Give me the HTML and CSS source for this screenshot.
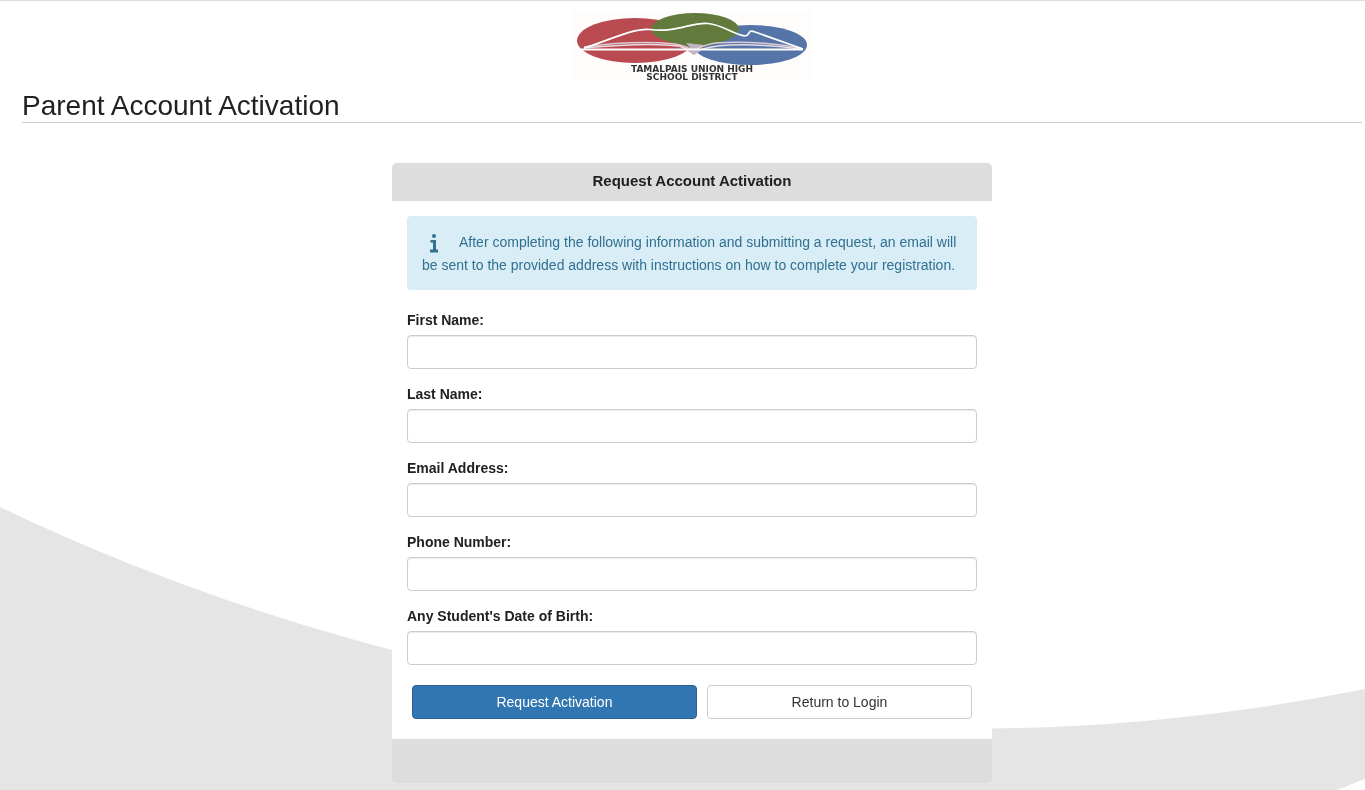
FILE: index.html
```html
<!DOCTYPE html>
<html lang="en">
<head>
<meta charset="utf-8">
<title>Parent Account Activation</title>
<link rel="stylesheet" href="styles.css">
</head>
<body>
<svg class="backdrop" viewBox="0 0 1365 790" preserveAspectRatio="none" aria-hidden="true">
  <path fill="#e5e5e5" d="M0 507Q186 596 392 650Q692 730 992 728.500Q1177 726.500 1365 689V779L1337 790H0Z"/>
</svg>
<header class="masthead">
  <svg class="logo" viewBox="0 0 240 70" role="img" aria-label="Tamalpais Union High School District">
    <rect width="240" height="70" fill="#fefdfb"/>
    <ellipse cx="63" cy="29.500" rx="58" ry="22.500" fill="#b84a50"/>
    <ellipse cx="178" cy="34" rx="57" ry="20" fill="#5575a8"/>
    <ellipse cx="123" cy="18" rx="44" ry="16" fill="#627b3d"/>
    <path d="M102 31H144L130 37L122 41L114 35Z" fill="#627b3d"/>
    <path d="M114 32L122 41L132 34Z" fill="#c3b4c4"/>
    <path d="M12 36Q63 29 103 33Q117 36 122 40Q128 35 143 32Q183 29 229 37" fill="none" stroke="#dccbd2" stroke-width="1.500"/>
    <path d="M12 37Q75 31 107 35L122 41Q136 35 158 34Q193 33 229 38" fill="none" stroke="#e7dce2" stroke-width="1.500"/>
    <path d="M9 38.500H231" fill="none" stroke="#fff" stroke-width="2"/>
    <path d="M115 39.500L122 44L129 39.500Z" fill="#c3b4c4"/>
    <path d="M12 37C36 30 60 17 78 18.500C104 22 119 11 136 12.500C151 14 161 23 173 25C179 24 175 18 183 21L231 38" fill="none" stroke="#fff" stroke-width="1.700"/>
    <text class="logo-text" x="120" y="61">TAMALPAIS UNION HIGH</text>
    <text class="logo-text" x="120" y="69">SCHOOL DISTRICT</text>
  </svg>
</header>
<main class="page">
  <h1 class="page-title">Parent Account Activation</h1>
  <form class="panel">
    <h2 class="panel-heading">Request Account Activation</h2>
    <div class="panel-body">
      <p class="notice">
        <svg class="notice-icon" viewBox="0 0 8 19" aria-hidden="true">
          <circle cx="4" cy="2" r="2"/>
          <path d="M.500 6H6V15.500H8V18.500H0V15.500H3V8.500H.500Z"/>
        </svg>After completing the following information and submitting a request, an email will be sent to the provided address with instructions on how to complete your registration.
      </p>
      <div class="field"><label for="first">First Name:</label><input id="first" type="text"></div>
      <div class="field"><label for="last">Last Name:</label><input id="last" type="text"></div>
      <div class="field"><label for="email">Email Address:</label><input id="email" type="email"></div>
      <div class="field"><label for="phone">Phone Number:</label><input id="phone" type="tel"></div>
      <div class="field"><label for="dob">Any Student's Date of Birth:</label><input id="dob" type="text"></div>
      <div class="actions">
        <button class="btn btn-primary" type="submit">Request Activation</button>
        <button class="btn btn-default" type="button">Return to Login</button>
      </div>
    </div>
    <div class="panel-footer"></div>
  </form>
</main>
</body>
</html>
```
FILE: styles.css
```css
* { box-sizing: border-box; }
body {
  margin: 0;
  border-top: 1px solid #ddd;
  background: #fff;
  color: #212121;
  font: 14px/20px "Liberation Sans", Arial, sans-serif;
}
.backdrop {
  position: fixed;
  inset: 0;
  z-index: -1;
  width: 100%;
  height: 100%;
}
.masthead {
  display: flex;
  justify-content: center;
  padding: 10px 3px 0 22px;
}
.logo { display: block; width: 240px; height: 70px; overflow: visible; }
.logo-text {
  fill: #333;
  font: bold 9px "DejaVu Sans", sans-serif;
  text-anchor: middle;
}
.page { padding: 8px 3px 7px 22px; }
.page-title {
  margin: 0 0 40px;
  border-bottom: 1px solid #ccc;
  font-size: 28px;
  font-weight: 400;
  line-height: 33px;
}
.panel { max-width: 600px; margin: 0 auto; }
.panel-heading {
  margin: 0;
  padding: 8px 15px 10px;
  border-radius: 5px 5px 0 0;
  background: #ddd;
  font-size: 15px;
  line-height: 20px;
  text-align: center;
}
.panel-body { padding: 15px 15px 20px; background: #fff; }
.notice {
  margin: 0 0 20px;
  padding: 15px 15px 13px;
  border-radius: 4px;
  background: #d9edf7;
  color: #31708f;
  line-height: 23px;
}
.notice-icon {
  width: 8px;
  height: 19px;
  margin: 0 21px 0 8px;
  vertical-align: middle;
  fill: currentColor;
}
.field { display: flex; flex-direction: column; gap: 5px; margin-bottom: 15px; }
.field label { font-weight: 700; }
.field input {
  width: 100%;
  height: 34px;
  padding: 6px 12px;
  border: 1px solid #ccc;
  border-radius: 4px;
  background: #fff;
  box-shadow: inset 0 1px 1px rgba(0, 0, 0, .08);
  font: inherit;
}
.actions { display: flex; gap: 10px; padding: 5px 5px 0; }
.btn {
  height: 34px;
  padding: 0;
  border: 1px solid #ccc;
  border-radius: 4px;
  background: #fff;
  color: #333;
  font: inherit;
}
.btn-primary { flex: 285; border-color: #286090; background: #3276b1; color: #fff; }
.btn-default { flex: 265; }
.panel-footer { height: 44px; border-radius: 0 0 5px 5px; background: #ddd; }
```
